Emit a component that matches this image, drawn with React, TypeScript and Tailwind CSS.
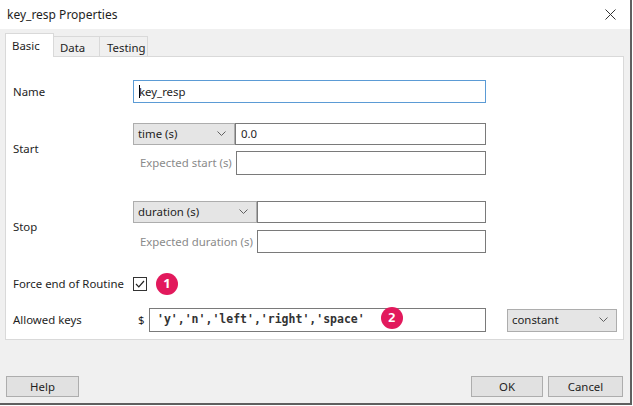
const Chevron = () => (
    <svg width="9" height="6" viewBox="0 0 9 6" className="shrink-0">
        <polyline points="0.5,0.5 4.5,4.5 8.5,0.5" fill="none" stroke="#606060" strokeWidth="1" />
    </svg>
);

const Select = ({ label, w }: { label: string; w: string }) => (
    <div className={`${w} h-full shrink-0 bg-[#e5e5e5] border border-[#adadad] flex items-center justify-between pl-[4px] pr-[8px]`}>
        <span>{label}</span>
        <Chevron />
    </div>
);

const Field = ({ children }: { children?: React.ReactNode }) => (
    <div className="flex-1 h-full bg-white border border-[#7a7a7a] flex items-center px-[5px]">{children}</div>
);

const Badge = ({ n }: { n: number }) => (
    <div className="w-[22px] h-[22px] rounded-full bg-[#e2195c] text-white text-[13px] font-bold flex items-center justify-center">
        {n}
    </div>
);

const Btn = ({ label, w }: { label: string; w: string }) => (
    <div className={`${w} h-[21px] bg-[#e1e1e1] border border-[#adadad] flex items-center justify-center`}>{label}</div>
);

export default function App() {
    return (
        <div className="w-[633px] h-[406px] bg-white font-['Noto_Sans',sans-serif] text-[11.4px] text-[#1e1e1e] whitespace-nowrap">
            <div className="w-[632px] h-[405px] flex flex-col border-r-2 border-b-2 border-[#5f5f5f]">
                {/* title bar */}
                <div className="h-[29px] shrink-0 bg-white flex items-center justify-between pl-[7px] pr-[14px]">
                    <span className="text-[12px]">key_resp Properties</span>
                    <svg width="11" height="11" viewBox="0 0 11 11">
                        <path d="M0.5 0.5 L10.5 10.5 M10.5 0.5 L0.5 10.5" stroke="#333" strokeWidth="1" />
                    </svg>
                </div>

                <div className="flex-1 bg-[#f0f0f0] flex flex-col px-[5px] pt-[4px]">
                    {/* tabs */}
                    <div className="flex items-end h-[23px]">
                        <div className="relative z-10 -mb-px h-[24px] w-[49px] bg-white border border-b-0 border-[#d9d9d9] pl-[6px] pt-[3px]">
                            Basic
                        </div>
                        <div className="h-[20px] w-[46px] bg-[#f0f0f0] border border-l-0 border-b-0 border-[#d9d9d9] pl-[6px] pt-[2px]">
                            Data
                        </div>
                        <div className="h-[20px] w-[48px] bg-[#f0f0f0] border border-l-0 border-b-0 border-[#d9d9d9] pl-[7px] pt-[2px]">
                            Testing
                        </div>
                    </div>

                    {/* panel */}
                    <div className="w-[619px] h-[284px] bg-white border border-[#d9d9d9] pl-[7px] pt-[23px] flex flex-col">
                        <div className="flex items-center h-[23px]">
                            <div className="w-[120px]">Name</div>
                            <div className="w-[353px] h-full border border-[#5b9bd5] flex items-center pl-[5px]">
                                <span className="w-px h-[13px] bg-black -mr-px" />
                                <span>key_resp</span>
                            </div>
                        </div>

                        <div className="flex items-center mt-[20px]">
                            <div className="w-[120px]">Start</div>
                            <div className="w-[353px] flex flex-col gap-[6px]">
                                <div className="flex h-[22px]">
                                    <Select label="time (s)" w="w-[102px]" />
                                    <Field>0.0</Field>
                                </div>
                                <div className="flex items-center h-[24px]">
                                    <div className="w-[103px] pl-[7px] text-[#8a8a8a]">Expected start (s)</div>
                                    <Field />
                                </div>
                            </div>
                        </div>

                        <div className="flex items-center mt-[26px]">
                            <div className="w-[120px]">Stop</div>
                            <div className="w-[353px] flex flex-col gap-[7px]">
                                <div className="flex h-[22px]">
                                    <Select label="duration (s)" w="w-[124px]" />
                                    <Field />
                                </div>
                                <div className="flex items-center h-[23px]">
                                    <div className="w-[124px] pl-[7px] text-[#8a8a8a]">Expected duration (s)</div>
                                    <Field />
                                </div>
                            </div>
                        </div>

                        <div className="flex items-center mt-[23px] h-[16px]">
                            <div className="w-[120px]">Force end of Routine</div>
                            <div className="w-[14px] h-[14px] border border-[#333] flex items-center justify-center">
                                <svg width="10" height="8" viewBox="0 0 10 8">
                                    <polyline points="1,4 3.8,6.8 9,1" fill="none" stroke="#222" strokeWidth="1.2" />
                                </svg>
                            </div>
                            <div className="ml-[9px]">
                                <Badge n={1} />
                            </div>
                        </div>

                        <div className="flex items-center mt-[16px] h-[24px]">
                            <div className="w-[120px]">Allowed keys</div>
                            <div className="w-[16px] pl-[5px]">$</div>
                            <div className="relative w-[337px] h-full border border-[#7a7a7a] flex items-center pl-[7px] font-['DejaVu_Sans_Mono',monospace] font-bold text-[11.5px] text-[#333]">
                                'y','n','left','right','space'
                                <div className="absolute left-[231px] top-[-2px]">
                                    <Badge n={2} />
                                </div>
                            </div>
                            <div className="ml-[21px] h-[23px]">
                                <Select label="constant" w="w-[110px]" />
                            </div>
                        </div>
                    </div>

                    {/* buttons */}
                    <div className="flex-1 flex items-end justify-between pb-[6px] pl-px pr-[2px]">
                        <Btn label="Help" w="w-[73px]" />
                        <div className="flex gap-[5px]">
                            <Btn label="OK" w="w-[72px]" />
                            <Btn label="Cancel" w="w-[75px]" />
                        </div>
                    </div>
                </div>
            </div>
        </div>
    );
}
